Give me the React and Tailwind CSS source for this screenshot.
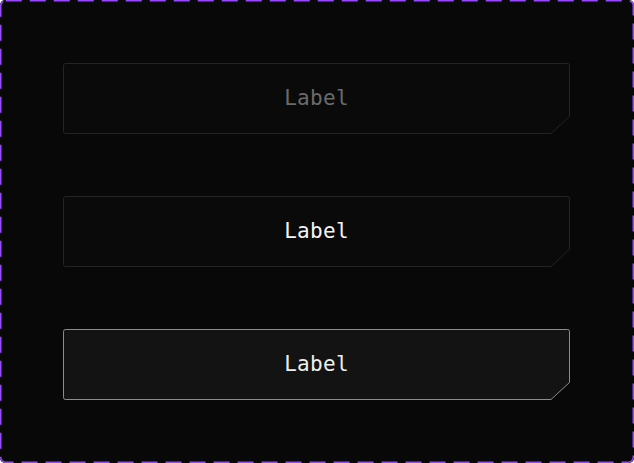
import React from "react";

const mono = { fontFamily: '"DejaVu Sans Mono", "Liberation Mono", monospace' };

const Outline = ({ stroke, fill }) => (
  <svg
    className="absolute inset-0 pointer-events-none"
    width="507"
    height="71"
    viewBox="0 0 507 71"
  >
    <path
      d="M2.5 0.5 H504.5 Q506.5 0.5 506.5 2.5 V53.5 L488 70.5 H2.5 Q0.5 70.5 0.5 68.5 V2.5 Q0.5 0.5 2.5 0.5 Z"
      fill={fill}
      stroke={stroke}
      strokeWidth="1"
    />
  </svg>
);

const ChamferButton = ({ stroke, fill, textClass }) => (
  <button className="relative w-[507px] h-[71px] flex items-center justify-center">
    <Outline stroke={stroke} fill={fill} />
    <span className={`relative text-[21px] leading-none tracking-[0.3px] ${textClass}`} style={mono}>
      Label
    </span>
  </button>
);

export default function App() {
  return (
    <div className="relative w-[634px] h-[463px] bg-[#080808] rounded-[5px] flex flex-col gap-[62px] px-[63px] py-[63px]">
      {/* dashed frame */}
      <svg className="absolute inset-0 pointer-events-none" width="634" height="463">
        <rect
          x="0.75"
          y="0.75"
          width="632.5"
          height="461.5"
          rx="5"
          fill="none"
          stroke="#9747ff"
          strokeWidth="1.5"
          strokeDasharray="16 8"
        />
      </svg>

      <ChamferButton stroke="#242424" fill="#0a0a0a" textClass="text-[#6a6a6a]" />
      <ChamferButton stroke="#242424" fill="#0a0a0a" textClass="text-[#f4f4f4]" />
      <ChamferButton stroke="#8c8c8c" fill="#131313" textClass="text-[#eeeeee]" />
    </div>
  );
}
